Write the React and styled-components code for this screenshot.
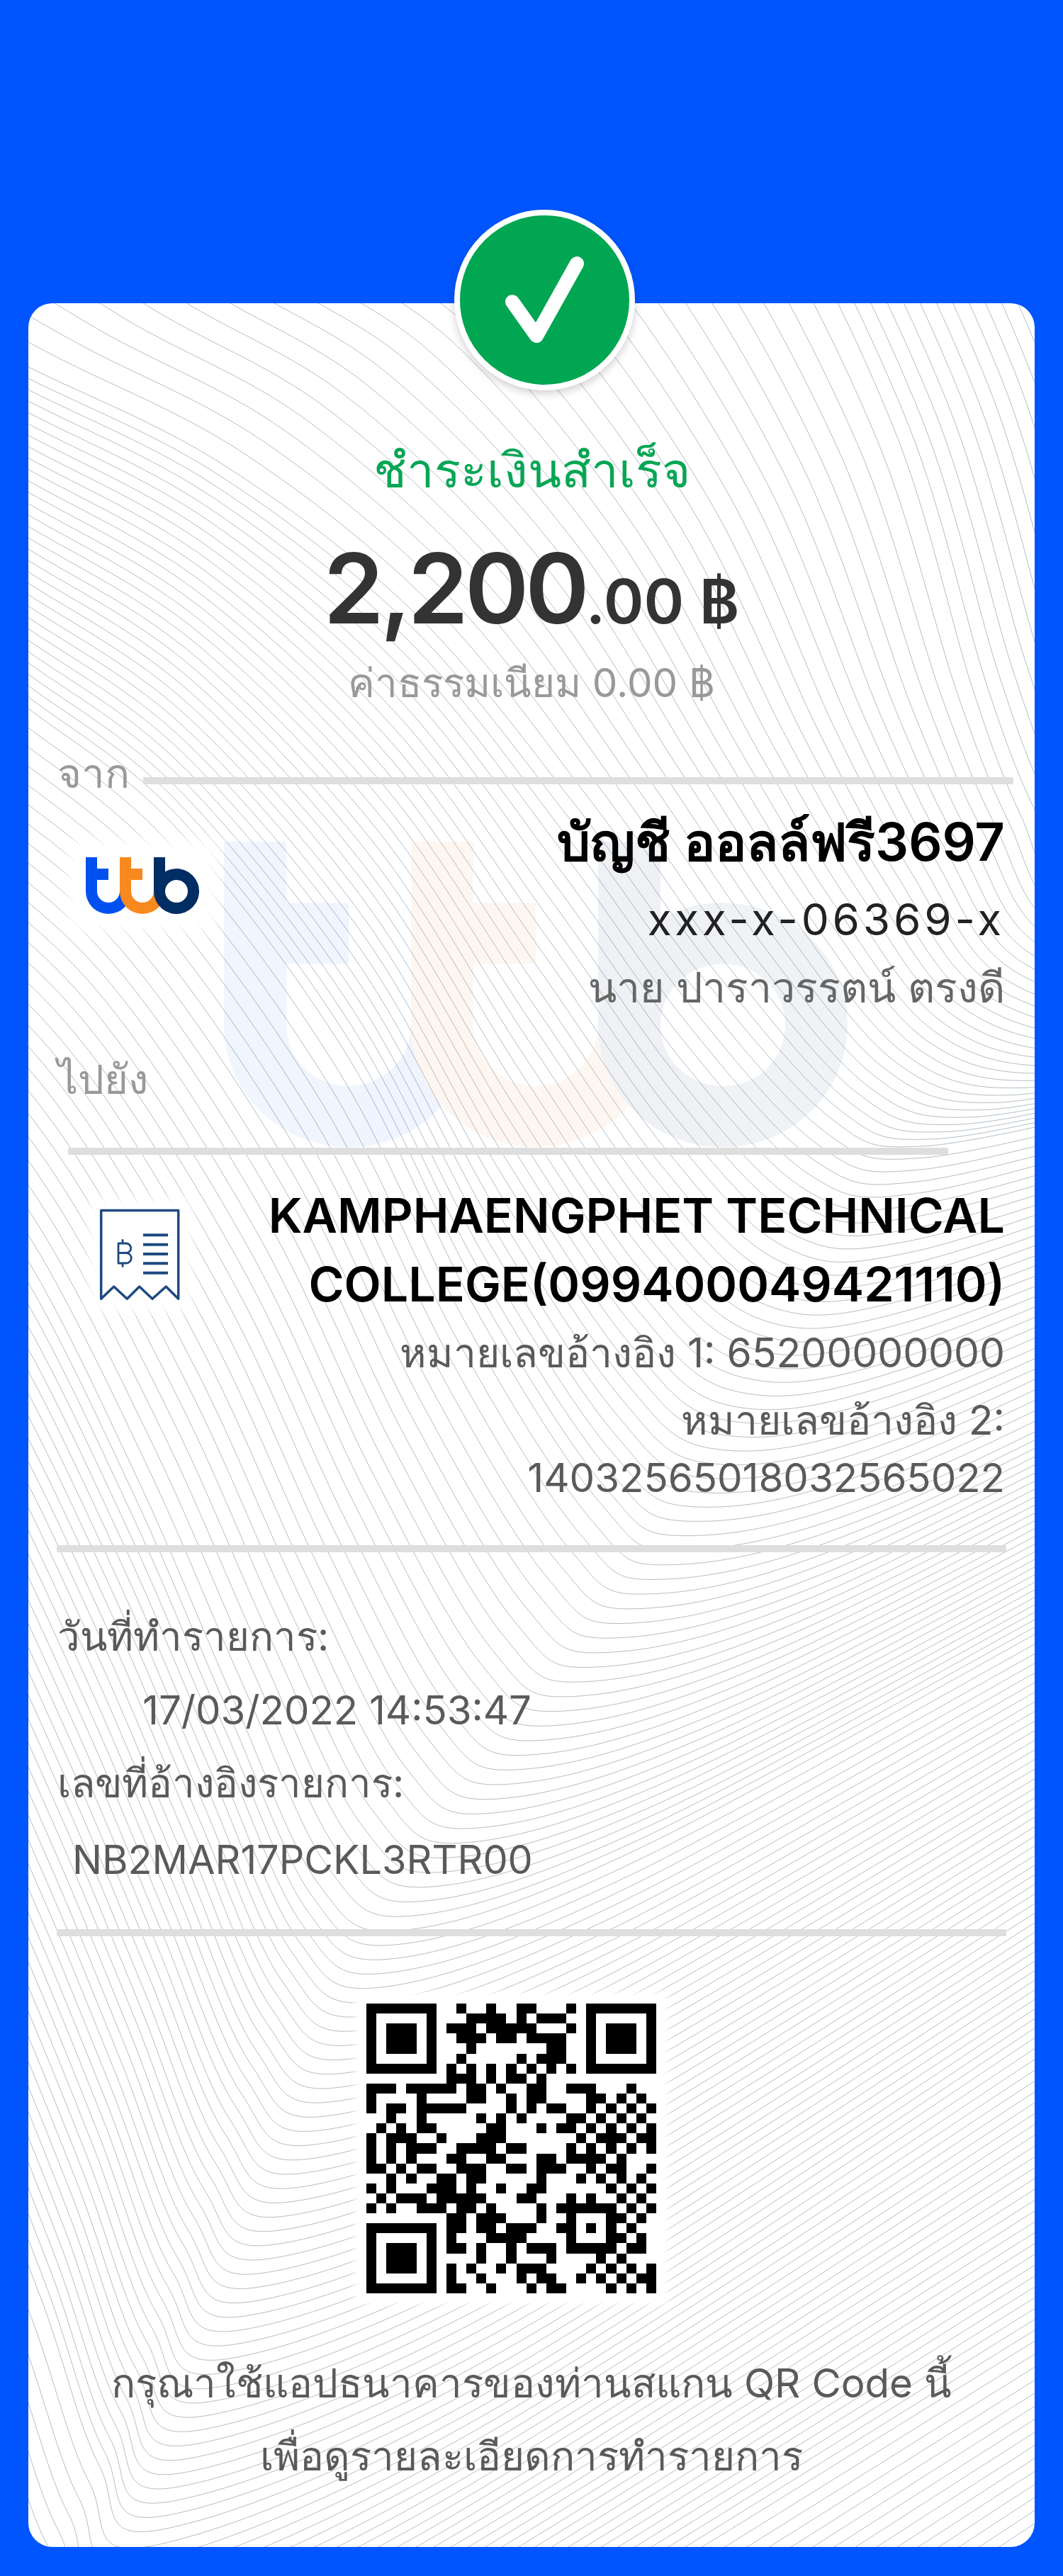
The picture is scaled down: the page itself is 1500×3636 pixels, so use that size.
import React from "react";
import styled, { createGlobalStyle } from "styled-components";

const GlobalStyle = createGlobalStyle`
  html, body {
    margin: 0;
    padding: 0;
    background: #0055ff;
  }
  * {
    box-sizing: border-box;
  }
`;

const Page = styled.div`
  width: 1500px;
  height: 3636px;
  padding: 428px 40px 41px;
  background: #0055ff;
  font-family: Inter, "Noto Sans", "Liberation Sans", sans-serif;
`;

const Card = styled.main`
  position: relative;
  height: 3167px;
  padding: 0 40px;
  border-radius: 34px;
  background: #fff;
`;

const PatternLayer = styled.div`
  position: absolute;
  inset: 0;
  overflow: hidden;
  border-radius: 34px;
  > svg {
    display: block;
    width: 100%;
    height: 100%;
  }
`;

const Content = styled.div`
  position: relative;
  display: flex;
  flex-direction: column;
`;

const Badge = styled.div`
  position: absolute;
  left: 601px;
  top: -132px;
  width: 255px;
  height: 255px;
  border-radius: 50%;
  background: #00a651;
  border: 8px solid #fff;
  box-shadow: 0 5px 12px rgba(0, 0, 0, 0.18);
  svg {
    position: absolute;
    inset: -8px;
  }
`;

const Title = styled.h1`
  margin: 195px 0 0;
  height: 80px;
  line-height: 80px;
  font-size: 69px;
  font-weight: 400;
  text-align: center;
  color: #07a654;
`;

const Amount = styled.div`
  margin-top: 52px;
  height: 150px;
  line-height: 150px;
  text-align: center;
  color: #333;
  white-space: nowrap;
`;

const AmountMain = styled.span`
  font-size: 137px;
  font-weight: 600;
  letter-spacing: -5px;
`;

const AmountSub = styled.span`
  font-size: 86px;
  font-weight: 600;
`;

const Fee = styled.div`
  margin-top: 19px;
  height: 80px;
  line-height: 80px;
  font-size: 56.5px;
  text-align: center;
  color: #999;
`;

const SectionLabel = styled.div`
  height: 70px;
  line-height: ${(p) => p.$lh || 70}px;
  margin: ${(p) => p.$top || 0}px 0 0 1px;
  font-size: 58px;
  color: #999;
  white-space: nowrap;
`;

const FromRow = styled.div`
  display: flex;
  align-items: center;
  gap: 19px;
  margin: 56px -10px 0 0;
`;

const Rule = styled.div`
  flex: ${(p) => (p.$grow ? 1 : "none")};
  height: 10px;
  margin: ${(p) => p.$margin || "0"};
  border-radius: 2px;
  background: #dedede;
`;

const AccountRow = styled.section`
  display: flex;
  justify-content: space-between;
`;

const LogoWrap = styled.div`
  flex: none;
  width: 160px;
  height: 80px;
  margin: 80px 0 0 41px;
  background: #fff;
  box-shadow: 0 0 18px 24px #fff;
  svg {
    display: block;
  }
`;

const ReceiptWrap = styled.div`
  flex: none;
  width: 116px;
  height: 132px;
  margin: 76px 0 0 60px;
  background: #fff;
  box-shadow: 0 0 14px 14px #fff;
`;

const TextBlock = styled.div`
  padding-top: ${(p) => p.$top || 0}px;
  padding-right: 2px;
  text-align: right;
`;

const Line = styled.div`
  height: ${(p) => p.$h}px;
  line-height: ${(p) => p.$h}px;
  font-size: ${(p) => p.$size}px;
  font-weight: ${(p) => p.$weight || 400};
  color: ${(p) => p.$color};
  letter-spacing: ${(p) => p.$spacing || 0}px;
  white-space: nowrap;
`;

const BillerName = styled.div`
  width: 1060px;
  margin-left: auto;
  line-height: 97px;
  font-size: 68px;
  font-weight: 600;
  color: #000;
`;

const Details = styled.section`
  padding: 68px 0 0 1px;
`;

const DetailLine = styled.div`
  height: ${(p) => p.$h}px;
  line-height: ${(p) => p.$h}px;
  padding-left: ${(p) => p.$indent || 0}px;
  font-size: ${(p) => p.$size || 56.3}px;
  color: #5a5a5a;
  white-space: nowrap;
`;

const QrWrap = styled.div`
  width: 409px;
  height: 409px;
  margin: 95px 0 0 437px;
  background: #fff;
  box-shadow: 0 0 8px 16px #fff;
  svg {
    display: block;
    width: 100%;
    height: 100%;
  }
`;

const Footer = styled.div`
  margin-top: 75px;
  text-align: center;
  line-height: 103px;
  font-size: 56.5px;
  color: #5a5a5a;
`;

// guilloche background: key curves traced from the slip, in page coordinates
const KEY_CURVES = [
  [[1000, -450], [1200, -90], [1382, 97], [1563, 459], [1672, 821], [1740, 1000], [1820, 1140], [2061, 1200], [2300, 1150]],
  [[700, -300], [900, 60], [1082, 247], [1263, 609], [1372, 971], [1440, 1150], [1520, 1290], [1761, 1350], [2000, 1300]],
  [[-200, 400], [40, 518], [312, 654], [583, 863], [810, 1134], [991, 1379], [1172, 1578], [1300, 1618], [1600, 1560]],
  [[-100, 900], [40, 1000], [250, 1170], [490, 1490], [674, 1853], [850, 2125], [964, 2188], [1257, 2115], [1800, 1850]],
  [[-300, 1500], [-100, 1600], [40, 1780], [200, 2100], [330, 2400], [450, 2660], [574, 2724], [900, 2610], [1500, 2285]],
  [[-500, 2300], [-300, 2500], [-150, 2750], [-40, 3000], [60, 3250], [140, 3480], [230, 3570], [700, 3370], [1500, 2850]],
  [[-900, 3000], [-700, 3200], [-550, 3450], [-440, 3700], [-340, 3950], [-260, 4130], [-170, 4220], [400, 3950], [1500, 3280]],
  [[-900, 3570], [-700, 3770], [-550, 4020], [-440, 4270], [-340, 4520], [-260, 4700], [-170, 4790], [400, 4450], [1500, 3700]],
];
const LINES_BETWEEN = [16, 26, 30, 26, 42, 28, 23];

function splinePath(pts) {
  let d = `M${pts[0][0].toFixed(1)} ${pts[0][1].toFixed(1)}`;
  for (let i = 0; i < pts.length - 1; i++) {
    const p0 = pts[Math.max(i - 1, 0)];
    const p1 = pts[i];
    const p2 = pts[i + 1];
    const p3 = pts[Math.min(i + 2, pts.length - 1)];
    const c1 = [p1[0] + (p2[0] - p0[0]) / 6, p1[1] + (p2[1] - p0[1]) / 6];
    const c2 = [p2[0] - (p3[0] - p1[0]) / 6, p2[1] - (p3[1] - p1[1]) / 6];
    d += `C${c1[0].toFixed(1)} ${c1[1].toFixed(1)} ${c2[0].toFixed(1)} ${c2[1].toFixed(1)} ${p2[0].toFixed(1)} ${p2[1].toFixed(1)}`;
  }
  return d;
}

function buildPattern() {
  let d = "";
  LINES_BETWEEN.forEach((count, k) => {
    const a = KEY_CURVES[k];
    const b = KEY_CURVES[k + 1];
    for (let n = 0; n < count; n++) {
      const t = n / count;
      d += splinePath(a.map((p, i) => [p[0] + (b[i][0] - p[0]) * t, p[1] + (b[i][1] - p[1]) * t]));
    }
  });
  return d;
}

const PATTERN_D = buildPattern();

const TtbPaths = ({ opacity = 1 }) => (
  <g opacity={opacity}>
    <path fill="#0050f0" d="M0 0H16V16H32V32H16V48A16 16 0 0 0 48 48H64A32 32 0 0 1 0 48Z" />
    <path fill="#f7891f" d="M48 0H64V16H80V32H64V48A16 16 0 0 0 96 48H112A32 32 0 0 1 48 48Z" />
    <path
      fill="#002d63"
      fillRule="evenodd"
      d="M96 0H112V20.3A32 32 0 1 1 96 48ZM128 32A16 16 0 1 0 128 64A16 16 0 1 0 128 32Z"
    />
  </g>
);

const Pattern = () => (
  <PatternLayer>
    <svg viewBox="40 428 1420 3167" preserveAspectRatio="none">
      <path d={PATTERN_D} fill="none" stroke="#b3bec7" strokeWidth="1" />
      <g transform="translate(316 1188) scale(5.5 5.39)">
        <TtbPaths opacity={0.06} />
      </g>
    </svg>
  </PatternLayer>
);

const ReceiptIcon = () => (
  <svg viewBox="-2 -2 116 132" width="116" height="132" fill="none" stroke="#1d4a80" strokeWidth="3.5" strokeLinejoin="round" strokeLinecap="round">
    <path d="M0.7 0.5H109.7V125.3L92.3 108L73 125.3L54.7 108L37.3 125.3L18.7 108L0.7 125.3Z" />
    <path strokeLinecap="butt" strokeWidth="4" d="M60 35.3H95M60 48.7H95M60 62H95M60 75.3H95M60 88.7H95" />
    <path strokeWidth="2.8" d="M25 47H36a6.75 6.75 0 0 1 0 13.5H25M36 60.5a7.25 7.25 0 0 1 0 14.5H25V47M31 42.5V47M31 75V79.5" />
  </svg>
);

// dark modules per row, outside the three finder squares
const QR_ROWS = [
  "9 12 15-16 20",
  "10-13 15 17-19",
  "8-10 12-16 20",
  "9-11 13-14 16-19",
  "10 18-19",
  "9 15 17-19",
  "8 10 12 14 16 18 20",
  "8-10 12 14-15 17",
  "0-2 4-8 10-11 13 16-17 20-22 26",
  "0 5 10-11 14 16-17 22-23 25 27",
  "0 2-3 5-9 14 16 18-19 22 24 26 28",
  "2 5 11 13 15 20-21 23 25 27",
  "1 3 5-6 12-13 17 19-20 22 24 26 28",
  "0 2-4 7 11-13 21 23-25 27-28",
  "0 2 4-6 9-12 14-15 20 22 24 26 28",
  "0 2 4 8-9 12-13 17-18 20-23 25",
  "0-1 3 5-6 9-11 14-15 17-19 22 24-25 28",
  "2 4 7-8 10-11 17 21 23 25 27",
  "0 2 6-8 10 13 16-17 24 26 28",
  "1 3-5 7-11 15-16 20 22 25 27",
  "0 2 5-7 9-10 12 17 19-24 26 28",
  "8-9 11-13 17 20 24-25 27",
  "8-9 11-12 14-16 19-20 22 24 26",
  "8 12-15 20 24-25 27",
  "8-9 11 14 16-18 20-24 26-27",
  "11 14 18 23 25",
  "8 10 13 15-17 22 24 26 28",
  "8 11 15 17-18 21 23 25 27-28",
  "8-9 12 16 18-19 24 26 28",
];

const finder = (x, y) =>
  `M${x} ${y}h7v7h-7ZM${x + 1} ${y + 1}v5h5v-5ZM${x + 2} ${y + 2}h3v3h-3Z`;

function qrPath() {
  let d = finder(0, 0) + finder(22, 0) + finder(0, 22);
  QR_ROWS.forEach((row, y) => {
    row.split(" ").forEach((part) => {
      const [from, to] = part.split("-").map(Number);
      d += `M${from} ${y}h${(to ?? from) - from + 1}v1h-${(to ?? from) - from + 1}Z`;
    });
  });
  return d;
}

const QrCode = () => (
  <QrWrap>
    <svg viewBox="0 0 29 29" shapeRendering="crispEdges">
      <path d={qrPath()} fill="#000" fillRule="evenodd" />
    </svg>
  </QrWrap>
);

export default function App() {
  return (
    <Page>
      <GlobalStyle />
      <Card>
        <Pattern />
        <Badge>
          <svg width="255" height="255" viewBox="0 0 255 255" fill="none">
            <path d="M82 130L116 178L173 76" stroke="#fff" strokeWidth="20" strokeLinecap="round" strokeLinejoin="round" />
          </svg>
        </Badge>
        <Content>
          <Title>ชำระเงินสำเร็จ</Title>
          <Amount>
            <AmountMain>2,200</AmountMain>
            <AmountSub>.00 ฿</AmountSub>
          </Amount>
          <Fee>ค่าธรรมเนียม 0.00 ฿</Fee>

          <FromRow>
            <SectionLabel $lh={62}>จาก</SectionLabel>
            <Rule $grow $margin="14px 0 0" />
          </FromRow>
          <AccountRow>
            <LogoWrap>
              <svg viewBox="0 0 160 80" width="160" height="80">
                <TtbPaths />
              </svg>
            </LogoWrap>
            <TextBlock>
              <Line $h={116} $size={74} $weight={600} $color="#000">บัญชี ออลล์ฟรี3697</Line>
              <Line $h={104} $size={62} $spacing={4.8} $color="#222">xxx-x-06369-x</Line>
              <Line $h={88} $size={59} $color="#666">นาย ปาราวรรตน์ ตรงดี</Line>
            </TextBlock>
          </AccountRow>

          <SectionLabel $top={50}>ไปยัง</SectionLabel>
          <Rule $margin="62px 82px 0 16px" />
          <AccountRow>
            <ReceiptWrap>
              <ReceiptIcon />
            </ReceiptWrap>
            <TextBlock $top={37}>
              <BillerName>KAMPHAENGPHET TECHNICAL COLLEGE(099400049421110)</BillerName>
              <Line $h={97} $size={57} $color="#5a5a5a">หมายเลขอ้างอิง 1: 65200000000</Line>
              <Line $h={94} $size={57} $color="#5a5a5a">หมายเลขอ้างอิง 2:</Line>
              <Line $h={68} $size={56.4} $color="#5a5a5a">14032565018032565022</Line>
            </TextBlock>
          </AccountRow>

          <Rule $margin="61px 0 0" />
          <Details>
            <DetailLine $h={101}>วันที่ทำรายการ:</DetailLine>
            <DetailLine $h={107} $indent={120}>17/03/2022 14:53:47</DetailLine>
            <DetailLine $h={100}>เลขที่อ้างอิงรายการ:</DetailLine>
            <DetailLine $h={116} $indent={21} $size={55.8}>NB2MAR17PCKL3RTR00</DetailLine>
          </Details>
          <Rule $margin="40px 0 0" />

          <QrCode />
          <Footer>
            กรุณาใช้แอปธนาคารของท่านสแกน QR Code นี้
            <br />
            เพื่อดูรายละเอียดการทำรายการ
          </Footer>
        </Content>
      </Card>
    </Page>
  );
}
